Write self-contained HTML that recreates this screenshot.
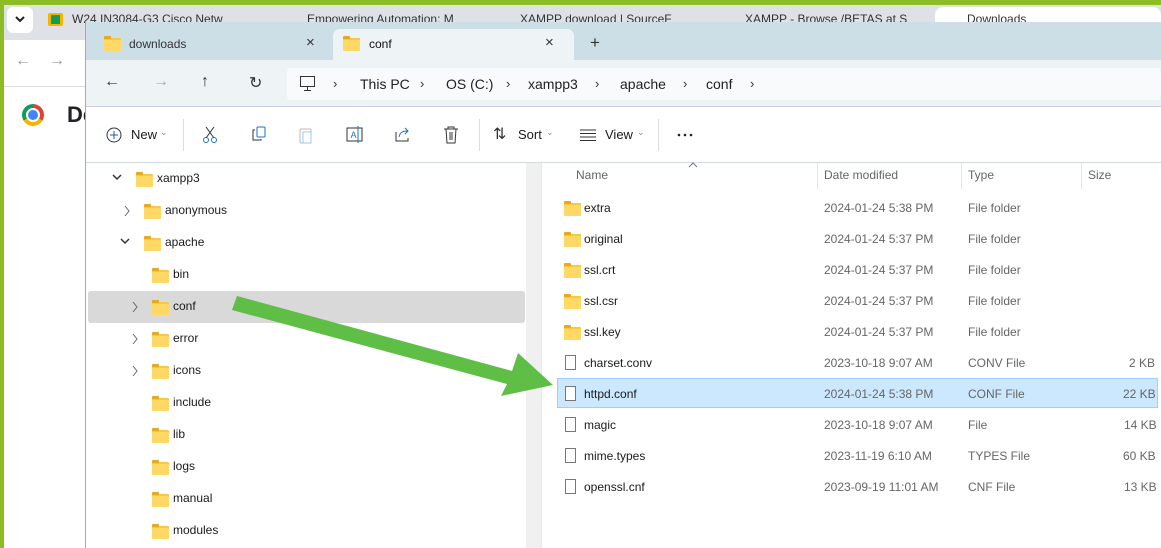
<!DOCTYPE html>
<html><head><meta charset="utf-8"><style>
*{margin:0;padding:0;box-sizing:border-box}
body{width:1161px;height:548px;overflow:hidden;background:#8dbd24;font-family:"Segoe UI","Liberation Sans",sans-serif;position:relative;font-size:12px;color:#1a1a1a}
.a{position:absolute}
.fold{position:absolute;width:17px;height:13px;background:#f8c93e;border-radius:1px}
.fold:before{content:"";position:absolute;left:0;top:-2px;width:7px;height:3px;background:#e8a820;border-radius:1px 1px 0 0}
.fold:after{content:"";position:absolute;left:0;top:2px;width:17px;height:11px;background:#ffd865;border-radius:1px}
.file{position:absolute;width:11px;height:15px;border:1px solid #777;background:#fff}
.t{position:absolute;font-size:12px;white-space:nowrap}
.g{color:#666}
.chev{position:absolute}
</style></head><body>
<div class="a" style="left:4px;top:5px;width:1157px;height:543px;background:#fff"></div>
<div class="a" style="left:4px;top:5px;width:1157px;height:35px;background:#dee1e6"></div>
<div class="a" style="left:7px;top:7px;width:26px;height:26px;background:#fff;border-radius:6px"></div>
<svg class="a" style="left:14px;top:15px" width="12" height="8"><path d="M2 2l4 4 4-4" stroke="#222" stroke-width="2" fill="none"/></svg>
<div class="a" style="left:48px;top:13px;width:15px;height:13px;background:#f4b400;border-radius:2px"></div>
<div class="a" style="left:51px;top:15px;width:9px;height:9px;background:#0f9d58"></div>
<div class="t" style="left:72px;top:12px;color:#333">W24 IN3084-G3 Cisco Netw</div>
<div class="t" style="left:307px;top:12px;color:#333">Empowering Automation: M</div>
<div class="t" style="left:520px;top:12px;color:#333">XAMPP download | SourceF</div>
<div class="t" style="left:745px;top:12px;color:#333">XAMPP - Browse /BETAS at S</div>
<div class="a" style="left:935px;top:7px;width:226px;height:33px;background:#fff;border-radius:8px 8px 0 0"></div>
<div class="t" style="left:967px;top:12px;color:#333">Downloads</div>
<div class="t" style="left:15px;top:52px;color:#999;font-size:16px">←</div>
<div class="t" style="left:49px;top:52px;color:#999;font-size:16px">→</div>
<div class="a" style="left:4px;top:86px;width:81px;height:1px;background:#dadce0"></div>
<div class="a" style="left:22px;top:104px;width:22px;height:22px;border-radius:50%;background:conic-gradient(#db4437 0 120deg,#f4b400 120deg 240deg,#0f9d58 240deg)"></div>
<div class="a" style="left:28px;top:110px;width:10px;height:10px;border-radius:50%;background:#4285f4;border:2px solid #fff;box-sizing:content-box;margin:-2px"></div>
<div class="t" style="left:67px;top:102px;font-size:22px;font-weight:bold;color:#202124">De</div>
<div class="a" style="left:85px;top:22px;width:1076px;height:526px;background:#fff;border-left:1px solid #aaa"></div>
<div class="a" style="left:86px;top:22px;width:1075px;height:38px;background:#cddfe6"></div>
<div class="fold" style="left:104px;top:38px"></div>
<div class="t" style="left:129px;top:37px;color:#333">downloads</div>
<div class="t" style="left:306px;top:34px;font-size:15px;color:#333">×</div>
<div class="a" style="left:333px;top:29px;width:241px;height:32px;background:#eef3f5;border-radius:7px 7px 0 0"></div>
<div class="fold" style="left:343px;top:38px"></div>
<div class="t" style="left:369px;top:37px;color:#111">conf</div>
<div class="t" style="left:545px;top:34px;font-size:15px;color:#333">×</div>
<div class="t" style="left:590px;top:33px;font-size:17px;color:#333">+</div>
<div class="a" style="left:86px;top:60px;width:1075px;height:47px;background:#eef3f5;border-bottom:1px solid #ccd"></div>
<div class="t" style="left:104px;top:73px;font-size:16px;color:#333">←</div>
<div class="t" style="left:153px;top:73px;font-size:16px;color:#aaa">→</div>
<div class="t" style="left:201px;top:73px;font-size:16px;color:#333">↑</div>
<div class="t" style="left:249px;top:73px;font-size:16px;color:#333">↻</div>
<div class="a" style="left:287px;top:68px;width:874px;height:32px;background:#f8fafb;border-radius:4px"></div>
<svg class="a" style="left:299px;top:75px" width="18" height="17"><rect x="1.5" y="1.5" width="14" height="10" fill="none" stroke="#333"/><path d="M8.5 12v3M5 15.5h7" stroke="#333"/></svg>
<div class="t" style="left:333px;top:76px;font-size:13px;color:#333">›</div>
<div class="t" style="left:360px;top:76px;font-size:14px;color:#222">This PC</div>
<div class="t" style="left:420px;top:76px;font-size:13px;color:#333">›</div>
<div class="t" style="left:446px;top:76px;font-size:14px;color:#222">OS (C:)</div>
<div class="t" style="left:506px;top:76px;font-size:13px;color:#333">›</div>
<div class="t" style="left:528px;top:76px;font-size:14px;color:#222">xampp3</div>
<div class="t" style="left:595px;top:76px;font-size:13px;color:#333">›</div>
<div class="t" style="left:620px;top:76px;font-size:14px;color:#222">apache</div>
<div class="t" style="left:683px;top:76px;font-size:13px;color:#333">›</div>
<div class="t" style="left:706px;top:76px;font-size:14px;color:#222">conf</div>
<div class="t" style="left:750px;top:76px;font-size:13px;color:#333">›</div>
<svg class="a" style="left:106px;top:127px" width="16" height="16"><circle cx="8" cy="8" r="7" fill="none" stroke="#333"/><path d="M8 4v8M4 8h8" stroke="#1a5fb4"/></svg>
<div class="t" style="left:131px;top:127px;font-size:13px">New</div><div class="t" style="left:160px;top:127px;font-size:9px;color:#888">⌄</div>
<div class="a" style="left:183px;top:119px;width:1px;height:32px;background:#ddd"></div>
<svg class="a" style="left:202px;top:126px" width="16" height="18"><path d="M4 1l8 11M12 1L4 12" stroke="#333"/><circle cx="4" cy="14" r="2.5" fill="none" stroke="#1a73c8"/><circle cx="12" cy="14" r="2.5" fill="none" stroke="#1a73c8"/></svg>
<svg class="a" style="left:251px;top:126px" width="16" height="16"><rect x="6" y="1" width="8" height="10" rx="1" fill="none" stroke="#1a73c8"/><path d="M4 4H2v10h8v-1" fill="none" stroke="#333"/></svg>
<svg class="a" style="left:298px;top:126px" width="16" height="18"><rect x="2" y="3" width="11" height="14" rx="1" fill="none" stroke="#bbb"/><rect x="5" y="6" width="8" height="11" fill="none" stroke="#9cc7ea"/></svg>
<svg class="a" style="left:346px;top:126px" width="18" height="17"><rect x="1" y="2" width="15" height="13" fill="none" stroke="#333"/><text x="4.5" y="12" font-size="9" fill="#1a73c8" font-family="Liberation Sans">A</text><path d="M12 0v17" stroke="#1a73c8"/></svg>
<svg class="a" style="left:395px;top:126px" width="17" height="17"><path d="M1 6v9h12v-3" fill="none" stroke="#333"/><path d="M4 11c1-5 4-6 9-6M10 2l3 3-3 3" fill="none" stroke="#1a73c8"/></svg>
<svg class="a" style="left:443px;top:126px" width="16" height="18"><path d="M1 3h14M5 3V1h6v2M3 3l1 14h8l1-14M7 6v8M9 6v8" fill="none" stroke="#333"/></svg>
<div class="a" style="left:479px;top:119px;width:1px;height:32px;background:#ddd"></div>
<div class="t" style="left:493px;top:124px;font-size:16px;color:#333">⇅</div>
<div class="t" style="left:518px;top:127px;font-size:13px">Sort</div><div class="t" style="left:546px;top:127px;font-size:9px;color:#888">⌄</div>
<svg class="a" style="left:580px;top:129px" width="16" height="12"><path d="M0 1h16M0 4.5h16M0 8h16M0 11.5h16" stroke="#333"/></svg>
<div class="t" style="left:605px;top:127px;font-size:13px">View</div><div class="t" style="left:637px;top:127px;font-size:9px;color:#888">⌄</div>
<div class="a" style="left:658px;top:119px;width:1px;height:32px;background:#ddd"></div>
<svg class="a" style="left:677px;top:133px" width="16" height="4"><circle cx="2" cy="2" r="1.3" fill="#222"/><circle cx="8" cy="2" r="1.3" fill="#222"/><circle cx="14" cy="2" r="1.3" fill="#222"/></svg>
<div class="a" style="left:86px;top:162px;width:1075px;height:1px;background:#d0dce2"></div>
<div class="a" style="left:526px;top:163px;width:15px;height:385px;background:#f0f0f0"></div>
<div class="a" style="left:541px;top:163px;width:1px;height:385px;background:#e8e8e8"></div>
<div class="a" style="left:88px;top:291px;width:437px;height:32px;background:#d9d9d9;border-radius:3px"></div>
<svg class="a" style="left:111px;top:173px" width="12" height="8"><path d="M2 2l4 4 4-4" stroke="#333" stroke-width="1.5" fill="none"/></svg>
<div class="fold" style="left:136px;top:174px"></div><div class="t" style="left:157px;top:171px">xampp3</div>
<svg class="chev" style="left:123px;top:205px" width="8" height="12"><path d="M2 1l4 5-4 5" stroke="#666" fill="none"/></svg>
<div class="fold" style="left:144px;top:206px"></div><div class="t" style="left:165px;top:203px">anonymous</div>
<svg class="a" style="left:119px;top:237px" width="12" height="8"><path d="M2 2l4 4 4-4" stroke="#333" stroke-width="1.5" fill="none"/></svg>
<div class="fold" style="left:144px;top:238px"></div><div class="t" style="left:165px;top:235px">apache</div>
<div class="fold" style="left:152px;top:270px"></div><div class="t" style="left:173px;top:267px">bin</div>
<svg class="chev" style="left:131px;top:301px" width="8" height="12"><path d="M2 1l4 5-4 5" stroke="#666" fill="none"/></svg>
<div class="fold" style="left:152px;top:302px"></div><div class="t" style="left:173px;top:299px">conf</div>
<svg class="chev" style="left:131px;top:333px" width="8" height="12"><path d="M2 1l4 5-4 5" stroke="#666" fill="none"/></svg>
<div class="fold" style="left:152px;top:334px"></div><div class="t" style="left:173px;top:331px">error</div>
<svg class="chev" style="left:131px;top:365px" width="8" height="12"><path d="M2 1l4 5-4 5" stroke="#666" fill="none"/></svg>
<div class="fold" style="left:152px;top:366px"></div><div class="t" style="left:173px;top:363px">icons</div>
<div class="fold" style="left:152px;top:398px"></div><div class="t" style="left:173px;top:395px">include</div>
<div class="fold" style="left:152px;top:430px"></div><div class="t" style="left:173px;top:427px">lib</div>
<div class="fold" style="left:152px;top:462px"></div><div class="t" style="left:173px;top:459px">logs</div>
<div class="fold" style="left:152px;top:494px"></div><div class="t" style="left:173px;top:491px">manual</div>
<div class="fold" style="left:152px;top:526px"></div><div class="t" style="left:173px;top:523px">modules</div>
<svg class="a" style="left:688px;top:162px" width="10" height="6"><path d="M1 5l4-4 4 4" stroke="#777" fill="none"/></svg>
<div class="t g" style="left:576px;top:168px">Name</div>
<div class="a" style="left:817px;top:163px;width:1px;height:26px;background:#e5e5e5"></div>
<div class="t g" style="left:824px;top:168px">Date modified</div>
<div class="a" style="left:961px;top:163px;width:1px;height:26px;background:#e5e5e5"></div>
<div class="t g" style="left:968px;top:168px">Type</div>
<div class="a" style="left:1081px;top:163px;width:1px;height:26px;background:#e5e5e5"></div>
<div class="t g" style="left:1088px;top:168px">Size</div>
<div class="a" style="left:557px;top:378px;width:601px;height:30px;background:#cce8ff;border:1px solid #99d1ff"></div>
<div class="fold" style="left:564px;top:203px"></div><div class="t" style="left:584px;top:201px">extra</div><div class="t g" style="left:824px;top:201px">2024-01-24 5:38 PM</div><div class="t g" style="left:968px;top:201px">File folder</div>
<div class="fold" style="left:564px;top:234px"></div><div class="t" style="left:584px;top:232px">original</div><div class="t g" style="left:824px;top:232px">2024-01-24 5:37 PM</div><div class="t g" style="left:968px;top:232px">File folder</div>
<div class="fold" style="left:564px;top:265px"></div><div class="t" style="left:584px;top:263px">ssl.crt</div><div class="t g" style="left:824px;top:263px">2024-01-24 5:37 PM</div><div class="t g" style="left:968px;top:263px">File folder</div>
<div class="fold" style="left:564px;top:296px"></div><div class="t" style="left:584px;top:294px">ssl.csr</div><div class="t g" style="left:824px;top:294px">2024-01-24 5:37 PM</div><div class="t g" style="left:968px;top:294px">File folder</div>
<div class="fold" style="left:564px;top:327px"></div><div class="t" style="left:584px;top:325px">ssl.key</div><div class="t g" style="left:824px;top:325px">2024-01-24 5:37 PM</div><div class="t g" style="left:968px;top:325px">File folder</div>
<div class="file" style="left:565px;top:355px"></div><div class="t" style="left:584px;top:356px">charset.conv</div><div class="t g" style="left:824px;top:356px">2023-10-18 9:07 AM</div><div class="t g" style="left:968px;top:356px">CONV File</div><div class="t g" style="left:1129px;top:356px">2 KB</div>
<div class="file" style="left:565px;top:386px"></div><div class="t" style="left:584px;top:387px">httpd.conf</div><div class="t g" style="left:824px;top:387px">2024-01-24 5:38 PM</div><div class="t g" style="left:968px;top:387px">CONF File</div><div class="t g" style="left:1123px;top:387px">22 KB</div>
<div class="file" style="left:565px;top:417px"></div><div class="t" style="left:584px;top:418px">magic</div><div class="t g" style="left:824px;top:418px">2023-10-18 9:07 AM</div><div class="t g" style="left:968px;top:418px">File</div><div class="t g" style="left:1124px;top:418px">14 KB</div>
<div class="file" style="left:565px;top:448px"></div><div class="t" style="left:584px;top:449px">mime.types</div><div class="t g" style="left:824px;top:449px">2023-11-19 6:10 AM</div><div class="t g" style="left:968px;top:449px">TYPES File</div><div class="t g" style="left:1123px;top:449px">60 KB</div>
<div class="file" style="left:565px;top:479px"></div><div class="t" style="left:584px;top:480px">openssl.cnf</div><div class="t g" style="left:824px;top:480px">2023-09-19 11:01 AM</div><div class="t g" style="left:968px;top:480px">CNF File</div><div class="t g" style="left:1124px;top:480px">13 KB</div>
<svg class="a" style="left:0;top:0" width="1161" height="548"><polygon points="237,296 512,371 518,353 553,385 501,396 507,384 232,310" fill="#5fbe46"/></svg>
</body></html>
